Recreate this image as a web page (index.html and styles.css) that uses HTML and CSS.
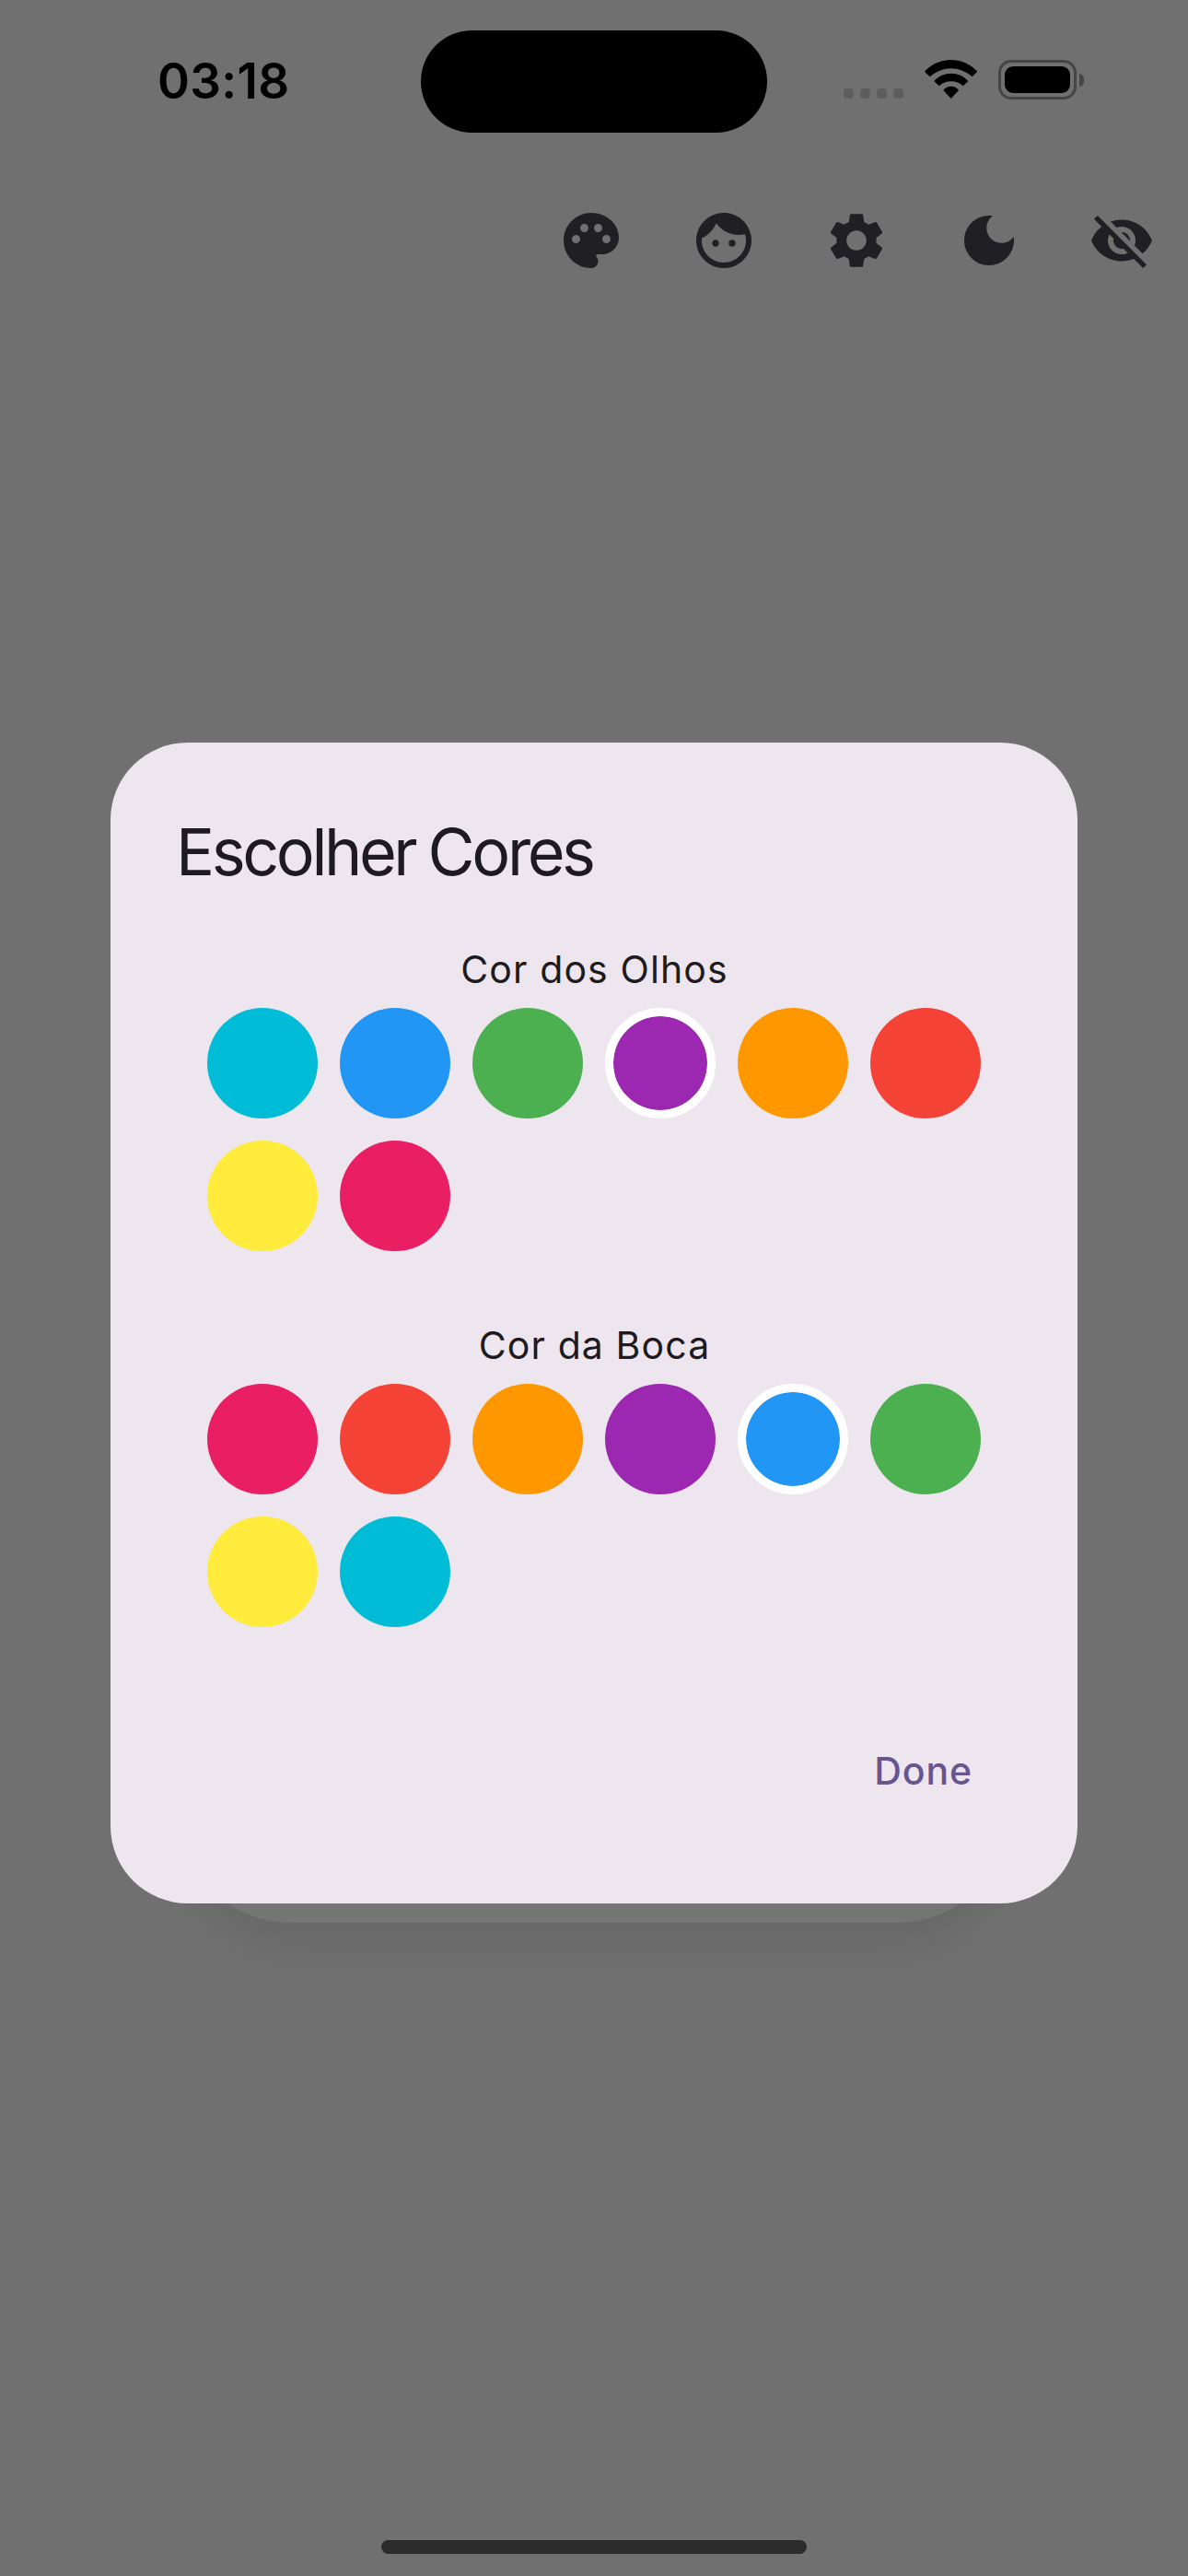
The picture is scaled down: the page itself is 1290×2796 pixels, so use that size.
FILE: index.html
```html
<!DOCTYPE html>
<html lang="pt-BR">
<head>
<meta charset="utf-8">
<title>Escolher Cores</title>
<link rel="stylesheet" href="styles.css">
</head>
<body>
<div class="screen">
  <header class="status-bar">
    <span class="clock">03:18</span>
    <span class="island"></span>
    <div class="indicators">
      <span class="cellular"><i></i><i></i><i></i><i></i></span>
      <svg class="wifi" viewBox="0 0 172 126">
        <path d="M0 38A116 116 0 0 1 172 38L155 55A101.7 101.7 0 0 0 17 55Z"/>
        <path d="M31 69A74 74 0 0 1 142 69L125 85A58 58 0 0 0 47 85Z"/>
        <path d="M61 99A30.5 30.5 0 0 1 111 99L86 126Z"/>
      </svg>
      <span class="battery"><span class="battery-shell"><span class="battery-level"></span></span><span class="battery-cap"></span></span>
    </div>
  </header>

  <nav class="toolbar">
    <svg class="icon" viewBox="0 0 24 24"><path d="M12 2C6.49 2 2 6.49 2 12s4.49 10 10 10c1.38 0 2.5-1.12 2.5-2.5 0-.61-.23-1.2-.64-1.67-.08-.1-.13-.21-.13-.33 0-.28.22-.5.5-.5H16c3.31 0 6-2.69 6-6 0-4.96-4.49-9-10-9zm-5.5 11c-.83 0-1.5-.67-1.5-1.5S5.67 10 6.5 10 8 10.67 8 11.5 7.33 13 6.5 13zm3-4C8.67 9 8 8.33 8 7.5S8.67 6 9.5 6s1.5.67 1.5 1.5S10.33 9 9.5 9zm5 0c-.83 0-1.5-.67-1.5-1.5S13.67 6 14.5 6s1.5.67 1.5 1.5S15.33 9 14.5 9zm3 4c-.83 0-1.5-.67-1.5-1.5s.67-1.5 1.5-1.5 1.5.67 1.5 1.5-.67 1.5-1.5 1.5z"/></svg>
    <svg class="icon" viewBox="0 0 24 24"><path d="M9 11.75c-.69 0-1.25.56-1.25 1.25s.56 1.25 1.25 1.25 1.25-.56 1.25-1.25-.56-1.25-1.25-1.25zm6 0c-.69 0-1.25.56-1.25 1.25s.56 1.25 1.25 1.25 1.25-.56 1.25-1.25-.56-1.25-1.25-1.25zM12 2C6.48 2 2 6.48 2 12s4.48 10 10 10 10-4.48 10-10S17.52 2 12 2zm0 18c-4.41 0-8-3.59-8-8 0-.29.02-.58.05-.86 2.36-1.05 4.23-2.98 5.21-5.37C11.07 8.33 14.05 10 17.42 10c.78 0 1.53-.09 2.25-.26.21.71.33 1.47.33 2.26 0 4.41-3.59 8-8 8z"/></svg>
    <svg class="icon" viewBox="0 0 24 24"><path d="M19.14 12.94c.04-.3.06-.61.06-.94 0-.32-.02-.64-.07-.94l2.03-1.58c.18-.14.23-.41.12-.61l-1.92-3.32c-.12-.22-.37-.29-.59-.22l-2.39.96c-.5-.38-1.03-.7-1.62-.94l-.36-2.54c-.04-.24-.24-.41-.48-.41h-3.84c-.24 0-.43.17-.47.41l-.36 2.54c-.59.24-1.13.57-1.62.94l-2.39-.96c-.22-.08-.47 0-.59.22L2.74 8.87c-.12.21-.08.47.12.61l2.03 1.58c-.05.3-.09.63-.09.94s.02.64.07.94l-2.03 1.58c-.18.14-.23.41-.12.61l1.92 3.32c.12.22.37.29.59.22l2.39-.96c.5.38 1.03.7 1.62.94l.36 2.54c.05.24.24.41.48.41h3.84c.24 0 .44-.17.47-.41l.36-2.54c.59-.24 1.13-.56 1.62-.94l2.39.96c.22.08.47 0 .59-.22l1.92-3.32c.12-.22.07-.47-.12-.61l-2.01-1.58zM12 15.6c-1.98 0-3.6-1.62-3.6-3.6s1.62-3.6 3.6-3.6 3.6 1.62 3.6 3.6-1.62 3.6-3.6 3.6z"/></svg>
    <svg class="icon" viewBox="0 0 24 24"><path d="M12 3c-4.97 0-9 4.03-9 9s4.03 9 9 9 9-4.03 9-9c0-.46-.04-.92-.1-1.36-.98 1.37-2.58 2.26-4.4 2.26-2.98 0-5.4-2.42-5.4-5.4 0-1.81.89-3.42 2.26-4.4-.44-.06-.9-.1-1.36-.1z"/></svg>
    <svg class="icon" viewBox="0 0 24 24"><path d="M12 7c2.76 0 5 2.24 5 5 0 .65-.13 1.26-.36 1.83l2.92 2.92c1.51-1.26 2.7-2.89 3.43-4.75-1.73-4.39-6-7.5-11-7.5-1.4 0-2.74.25-3.98.7l2.16 2.16C10.74 7.13 11.35 7 12 7zM2 4.27l2.28 2.28.46.46C3.08 8.3 1.78 10.02 1 12c1.73 4.39 6 7.5 11 7.5 1.55 0 3.03-.3 4.38-.84l.42.42L19.73 22 21 20.73 3.27 3 2 4.27zM7.53 9.8l1.55 1.55c-.05.21-.08.43-.08.65 0 1.66 1.34 3 3 3 .22 0 .44-.03.65-.08l1.55 1.55c-.67.33-1.41.53-2.2.53-2.76 0-5-2.24-5-5 0-.79.2-1.53.53-2.2zm4.31-.78l3.15 3.15.02-.16c0-1.66-1.34-3-3-3l-.17.01z"/></svg>
  </nav>

  <main class="stage">
    <div class="face-card"></div>
    <section class="dialog" role="dialog">
      <h1 class="dialog-title">Escolher Cores</h1>
      <div class="picker">
        <h2 class="picker-label">Cor dos Olhos</h2>
        <div class="swatches">
          <span class="swatch cyan"></span><span class="swatch blue"></span><span class="swatch green"></span><span class="swatch purple selected"></span><span class="swatch orange"></span><span class="swatch red"></span><span class="swatch yellow"></span><span class="swatch pink"></span>
        </div>
      </div>
      <div class="picker">
        <h2 class="picker-label">Cor da Boca</h2>
        <div class="swatches">
          <span class="swatch pink"></span><span class="swatch red"></span><span class="swatch orange"></span><span class="swatch purple"></span><span class="swatch blue selected"></span><span class="swatch green"></span><span class="swatch yellow"></span><span class="swatch cyan"></span>
        </div>
      </div>
      <div class="actions"><button class="done">Done</button></div>
    </section>
  </main>

  <footer class="home"><span class="home-bar"></span></footer>
</div>
</body>
</html>
```
FILE: styles.css
```css
* { box-sizing: border-box; }

body {
  margin: 0;
  font-family: Inter, "Liberation Sans", sans-serif;
  color: #1d1b20;
}

.screen {
  display: flex;
  flex-direction: column;
  width: 1290px;
  height: 2796px;
  overflow: hidden;
  background: #707070;
}

/* Status bar */
.status-bar {
  display: grid;
  grid-template-columns: 457px 376px 457px;
  align-items: start;
  height: 177px;
  flex: none;
}
.clock {
  margin: 55px 0 0 171px;
  font-size: 53px;
  line-height: 66px;
  font-weight: 600;
  letter-spacing: 0.3px;
  color: #000;
}
.island {
  height: 111px;
  margin-top: 33px;
  border-radius: 56px;
  background: #000;
}
.indicators {
  display: flex;
  align-items: flex-end;
  margin: 65px 0 0 83px;
  height: 43px;
}
.cellular { display: flex; gap: 7px; margin-bottom: 1px; }
.cellular i { width: 11px; height: 11px; border-radius: 4px; background: #5d5d5d; }
.wifi { width: 57.4px; height: 42px; margin: 0 22.6px 1px 22.7px; flex: none; }
.battery { display: flex; align-items: center; gap: 3px; }
.battery-shell {
  width: 85px;
  height: 43px;
  padding: 4px;
  border: 3px solid #454545;
  border-radius: 14px;
}
.battery-level { display: block; height: 29px; border-radius: 9px; background: #000; }
.battery-cap { width: 5px; height: 14px; border-radius: 0 6px 6px 0 / 0 7px 7px 0; background: #454545; }

/* Toolbar */
.toolbar {
  display: flex;
  justify-content: flex-end;
  align-items: center;
  gap: 72px;
  height: 168px;
  padding-right: 36px;
  flex: none;
}
.icon { width: 72px; height: 72px; fill: #201f24; }

/* Dialog above the dimmed face card */
.stage {
  display: grid;
  justify-content: center;
  align-items: start;
  grid-template-columns: 1050px;
  padding-top: 460.5px;
  flex: 1;
}
.face-card, .dialog { grid-area: 1 / 1; }
.face-card {
  justify-self: center;
  width: 900px;
  height: 1200px;
  margin-top: 81px;
  border-radius: 120px;
  background: #757575;
  box-shadow: 0 24px 46px rgba(0, 0, 0, 0.07);
}
.dialog {
  position: relative;
  height: 1260px;
  padding: 72px;
  border-radius: 84px;
  background: #ede6ee;
}
.dialog-title {
  margin: -1px 0 49px -1px;
  font-size: 70px;
  line-height: 96px;
  font-weight: 400;
  letter-spacing: -3.4px;
  word-spacing: -2px;
}
.picker { margin-bottom: 48px; }
.picker-label {
  margin: 0 0 12px;
  height: 60px;
  font-size: 41px;
  line-height: 60px;
  font-weight: 380;
  letter-spacing: 1.1px;
  text-indent: 1px;
  text-align: center;
}
.swatches {
  display: grid;
  grid-template-columns: repeat(6, 120px);
  gap: 24px;
  padding: 0 33px 24px;
}
.swatch { height: 120px; border-radius: 50%; }
.selected { border: 9px solid #fff; background-clip: padding-box; }
.cyan { background-color: #00bcd7; }
.blue { background-color: #2196f4; }
.green { background-color: #4caf50; }
.purple { background-color: #9c27b0; }
.orange { background-color: #ff9800; }
.red { background-color: #f44336; }
.yellow { background-color: #ffeb3b; }
.pink { background-color: #e91e63; }

.actions { display: flex; justify-content: flex-end; padding-top: 54px; }
.done {
  padding: 0;
  margin-right: 42px;
  border: 0;
  background: none;
  font: 460 41px/60px Inter, "Liberation Sans", sans-serif;
  letter-spacing: 0.9px;
  color: #68558f;
}

/* Home indicator */
.home { display: flex; justify-content: center; align-items: flex-end; height: 39px; padding-bottom: 24px; flex: none; }
.home-bar { width: 462px; height: 15px; border-radius: 8px; background: #2c2c2c; }
```
